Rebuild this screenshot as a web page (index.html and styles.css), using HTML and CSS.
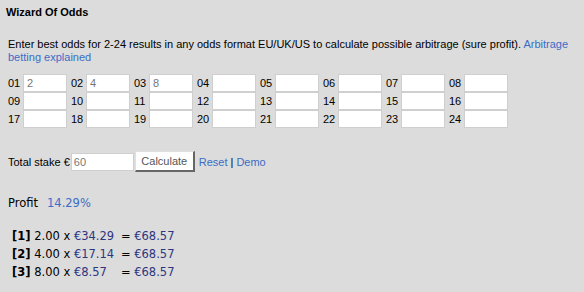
FILE: index.html
```html
<!DOCTYPE html>
<html>
<head>
<meta charset="utf-8">
<link rel="stylesheet" href="styles.css">
</head>
<body>
<div class="page">
  <h1 class="title">Wizard Of Odds</h1>
  <p class="intro">Enter best odds for 2-24 results in any odds format EU/UK/US to calculate possible arbitrage (sure profit). <a href="#" class="link">Arbitrage betting explained</a></p>
  <div class="grid">
    <label class="cell"><span class="num">01</span><input class="odd" value="2"></label>
    <label class="cell"><span class="num">02</span><input class="odd" value="4"></label>
    <label class="cell"><span class="num">03</span><input class="odd" value="8"></label>
    <label class="cell"><span class="num">04</span><input class="odd"></label>
    <label class="cell"><span class="num">05</span><input class="odd"></label>
    <label class="cell"><span class="num">06</span><input class="odd"></label>
    <label class="cell"><span class="num">07</span><input class="odd"></label>
    <label class="cell"><span class="num">08</span><input class="odd"></label>
    <label class="cell"><span class="num">09</span><input class="odd"></label>
    <label class="cell"><span class="num">10</span><input class="odd"></label>
    <label class="cell"><span class="num">11</span><input class="odd"></label>
    <label class="cell"><span class="num">12</span><input class="odd"></label>
    <label class="cell"><span class="num">13</span><input class="odd"></label>
    <label class="cell"><span class="num">14</span><input class="odd"></label>
    <label class="cell"><span class="num">15</span><input class="odd"></label>
    <label class="cell"><span class="num">16</span><input class="odd"></label>
    <label class="cell"><span class="num">17</span><input class="odd"></label>
    <label class="cell"><span class="num">18</span><input class="odd"></label>
    <label class="cell"><span class="num">19</span><input class="odd"></label>
    <label class="cell"><span class="num">20</span><input class="odd"></label>
    <label class="cell"><span class="num">21</span><input class="odd"></label>
    <label class="cell"><span class="num">22</span><input class="odd"></label>
    <label class="cell"><span class="num">23</span><input class="odd"></label>
    <label class="cell"><span class="num">24</span><input class="odd"></label>
  </div>
  <div class="stake">
    <span class="stake-label">Total stake €</span><input class="stake-input" value="60"><button class="calc">Calculate</button>
    <a href="#" class="link">Reset</a><span class="sep">|</span><a href="#" class="link">Demo</a>
  </div>
  <div class="profit"><span class="profit-label">Profit</span><span class="profit-val">14.29%</span></div>
  <div class="results">
    <div class="res"><b>[1]</b> 2.00 x <span class="amt">€34.29</span><span class="eq">= <span class="tot">€68.57</span></span></div>
    <div class="res"><b>[2]</b> 4.00 x <span class="amt">€17.14</span><span class="eq">= <span class="tot">€68.57</span></span></div>
    <div class="res"><b>[3]</b> 8.00 x <span class="amt">€8.57</span><span class="eq">= <span class="tot">€68.57</span></span></div>
  </div>
</div>
</body>
</html>
```
FILE: styles.css
```css
html, body {
  margin: 0;
  padding: 0;
  background: #dcdcdc;
}
.page {
  font-family: "Liberation Sans", Arial, sans-serif;
  font-size: 11px;
  color: #000;
  padding: 5px 0 0 0;
}
.title {
  font-size: 11px;
  font-weight: bold;
  margin: 0 0 0 6px;
  line-height: 14px;
}
.intro {
  margin: 19px 8px 0 8px;
  line-height: 13px;
}
.link {
  color: #3b6cc6;
  text-decoration: none;
}
.grid {
  margin: 10px 0 0 8px;
  display: grid;
  grid-template-columns: repeat(8, 63px);
  grid-auto-rows: 18px;
}
.cell {
  display: flex;
  align-items: center;
}
.num {
  width: 15px;
  line-height: 18px;
}
.odd {
  box-sizing: border-box;
  width: 44px;
  height: 18px;
  margin: 0;
  padding: 0 3px;
  border: 1px solid #cfcfcf;
  background: #fff;
  font-family: "Liberation Sans", Arial, sans-serif;
  font-size: 11px;
  color: #777;
  outline: none;
}
.stake {
  margin: 23px 0 0 8px;
  display: flex;
  align-items: center;
  height: 21px;
}
.stake-input {
  box-sizing: border-box;
  width: 63px;
  height: 18px;
  margin: 0 0 0 1px;
  padding: 0 2px;
  border: 1px solid #cfcfcf;
  background: #fff;
  font-family: "Liberation Sans", Arial, sans-serif;
  font-size: 11px;
  color: #777;
  outline: none;
}
.calc {
  box-sizing: border-box;
  width: 60px;
  height: 21px;
  margin: 0 4px 0 1px;
  padding: 0;
  background: #fff;
  border: 1px solid #e0e0e0;
  border-right: 2px solid #666;
  border-bottom: 2px solid #666;
  font-family: "Liberation Sans", Arial, sans-serif;
  font-size: 11px;
  color: #555;
}
.sep {
  margin: 0 3px;
}
.profit {
  margin: 22px 0 0 8px;
  font-family: "DejaVu Sans", sans-serif;
  font-size: 11.5px;
  line-height: 18px;
}
.profit-val {
  color: #3b6cc6;
  margin-left: 9px;
}
.results {
  margin: 15px 0 0 12px;
  font-family: "DejaVu Sans", sans-serif;
  font-size: 11.5px;
}
.res {
  line-height: 18px;
}
.amt {
  color: #2e3580;
  display: inline-block;
  width: 47px;
}
.tot {
  color: #2e3580;
}
```
